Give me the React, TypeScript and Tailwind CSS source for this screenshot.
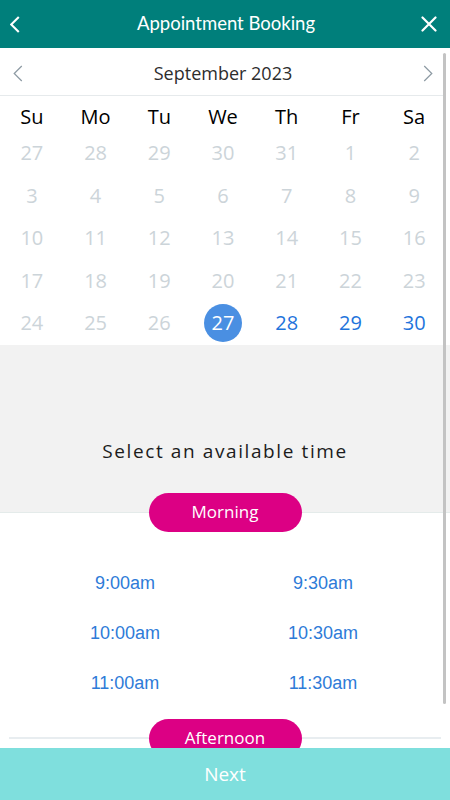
import React from "react";

const weekdays = ["Su", "Mo", "Tu", "We", "Th", "Fr", "Sa"];

const weeks: { day: number; kind: "muted" | "open" | "selected" }[][] = [
  [27, 28, 29, 30, 31, 1, 2],
  [3, 4, 5, 6, 7, 8, 9],
  [10, 11, 12, 13, 14, 15, 16],
  [17, 18, 19, 20, 21, 22, 23],
  [24, 25, 26, 27, 28, 29, 30],
].map((row, r) =>
  row.map((day, c) => ({
    day,
    kind: r === 4 && c === 3 ? "selected" : r === 4 && c > 3 ? "open" : "muted",
  }))
);

const morning = ["9:00am", "9:30am", "10:00am", "10:30am", "11:00am", "11:30am"];

function Chevron({ dir, className }: { dir: "left" | "right"; className?: string }) {
  return (
    <svg viewBox="0 0 10 18" className={className} fill="none" stroke="currentColor">
      {dir === "left" ? <path d="M9 1 1 9l8 8" /> : <path d="m1 1 8 8-8 8" />}
    </svg>
  );
}

function Pill({ label }: { label: string }) {
  return (
    <div className="w-[153px] h-[39px] rounded-full bg-[#dc0084] text-white text-[17px] flex items-center justify-center font-['Open_Sans',sans-serif]">
      {label}
    </div>
  );
}

export default function App() {
  return (
    <div className="w-[450px] h-[800px] flex flex-col bg-white overflow-hidden">
      {/* header */}
      <div className="h-12 shrink-0 bg-[#007f7b] flex items-center px-[10px] text-white">
        <div className="w-[30px]">
          <Chevron dir="left" className="w-[10px] h-[17px] stroke-[2.2]" />
        </div>
        <h1 className="flex-1 text-center text-[18.5px] font-['Lato',sans-serif] pl-[2px]">Appointment Booking</h1>
        <div className="w-[30px] flex justify-end">
          <svg viewBox="0 0 16 16" className="w-4 h-4 mr-[3px]" stroke="currentColor" strokeWidth="2.2" strokeLinecap="round">
            <path d="M1.5 1.5l13 13M14.5 1.5l-13 13" />
          </svg>
        </div>
      </div>

      {/* scroll area */}
      <div className="flex-1 relative overflow-hidden">
        <div className="pr-[4px] font-['Open_Sans',sans-serif]">
          <div className="h-12 flex items-center justify-between px-[13px] pt-[3px] border-b border-[#e6eaec]">
            <Chevron dir="left" className="w-[10px] h-[17px] text-[#8d9aa3] stroke-[1.3]" />
            <span className="text-[18px] text-[#2d2d2d]">September 2023</span>
            <Chevron dir="right" className="w-[10px] h-[17px] text-[#8d9aa3] stroke-[1.3]" />
          </div>

          <div className="grid grid-cols-7 h-[36px] pt-[6px] items-center text-[20px] text-black text-center">
            {weekdays.map((d) => (
              <span key={d}>{d}</span>
            ))}
          </div>

          {weeks.map((row, i) => (
            <div key={i} className="grid grid-cols-7 h-[42.5px] items-center text-[20px] text-center">
              {row.map((cell, j) => (
                <div key={j} className="flex justify-center">
                  {cell.kind === "selected" ? (
                    <span className="w-[38px] h-[38px] rounded-full bg-[#4a8fe2] text-white flex items-center justify-center">
                      {cell.day}
                    </span>
                  ) : (
                    <span className={cell.kind === "open" ? "text-[#1f74dc]" : "text-[#ccd4d9]"}>{cell.day}</span>
                  )}
                </div>
              ))}
            </div>
          ))}
        </div>

        {/* time selection */}
        <div className="h-[168px] bg-[#f2f2f2] border-b border-[#e4ebea] flex justify-center pt-[92px]">
          <span className="text-[19px] tracking-[1.6px] text-[#1c1c1c] font-['Open_Sans',sans-serif]">
            Select an available time
          </span>
        </div>

        <div className="flex justify-center -mt-[20px] relative">
          <Pill label="Morning" />
        </div>

        <div className="grid grid-cols-2 w-[396px] ml-[26px] mt-[27px] font-['Liberation_Sans',Arial,sans-serif] text-[18px] text-[#2e7bd8]">
          {morning.map((t) => (
            <div key={t} className="h-[50px] flex items-center justify-center">
              {t}
            </div>
          ))}
        </div>

        <div className="flex items-center px-[9px] mt-[10px]">
          <div className="flex-1 h-[2px] bg-[#e8edf0]" />
          <Pill label="Afternoon" />
          <div className="flex-1 h-[2px] bg-[#e8edf0]" />
        </div>

        {/* scrollbar */}
        <div className="absolute top-[5px] right-[4px] w-[3px] h-[651px] bg-[#c3c3c3] rounded-full" />
      </div>

      {/* footer */}
      <div className="h-[52px] shrink-0 bg-[#7fdfdd] flex items-center justify-center text-white text-[19px] font-['Open_Sans',sans-serif]">
        Next
      </div>
    </div>
  );
}
